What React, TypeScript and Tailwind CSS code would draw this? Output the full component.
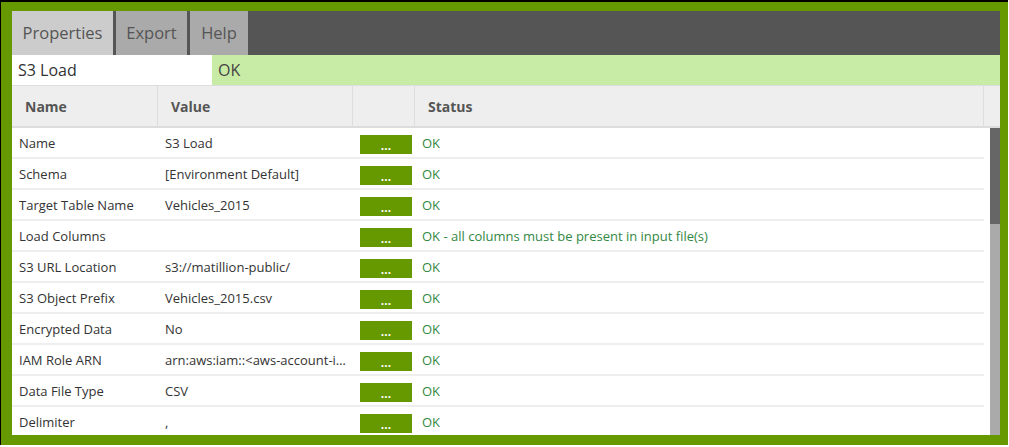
import React from 'react';

const rows: [string, string, string][] = [
  ['Name', 'S3 Load', 'OK'],
  ['Schema', '[Environment Default]', 'OK'],
  ['Target Table Name', 'Vehicles_2015', 'OK'],
  ['Load Columns', '', 'OK - all columns must be present in input file(s)'],
  ['S3 URL Location', 's3://matillion-public/', 'OK'],
  ['S3 Object Prefix', 'Vehicles_2015.csv', 'OK'],
  ['Encrypted Data', 'No', 'OK'],
  ['IAM Role ARN', 'arn:aws:iam::<aws-account-id>:role/redshift', 'OK'],
  ['Data File Type', 'CSV', 'OK'],
  ['Delimiter', ',', 'OK'],
];

export default function App() {
  return (
    <div className="w-[1009px] h-[447px] bg-white font-['Open_Sans',sans-serif]">
      <div className="w-[1008px] h-[445px] border-t-2 border-l border-black bg-[#669900] pt-[9px] pl-[11px] pr-[7px] pb-[9px]">
        <div className="flex flex-col w-[988px] h-[424px] bg-white">
          {/* tabs */}
          <div className="flex h-[44px] bg-[#555555] shrink-0">
            <div className="w-[101px] bg-[#cccccc] text-[#555] text-[16.5px] flex items-center justify-center">Properties</div>
            <div className="w-[3px]" />
            <div className="w-[71px] bg-[#aaaaaa] text-[#555] text-[16.5px] flex items-center justify-center">Export</div>
            <div className="w-[3px]" />
            <div className="w-[58px] bg-[#aaaaaa] text-[#555] text-[16.5px] flex items-center justify-center">Help</div>
          </div>
          {/* component name */}
          <div className="flex h-[31px] shrink-0 border-b border-[#dddddd]">
            <div className="w-[200px] pl-[6px] flex items-center text-[16px] text-[#333]">S3 Load</div>
            <div className="flex-1 bg-[#c8eca5] pl-[6px] flex items-center text-[16px] text-[#444]">OK</div>
          </div>
          {/* header */}
          <div className="flex h-[42px] shrink-0 bg-[#eeeeee] border-b-2 border-[#dddddd] text-[14px] font-bold text-[#555]">
            <div className="w-[146px] shrink-0 pl-[13px] flex items-center border-r border-[#dddddd]">Name</div>
            <div className="w-[195px] shrink-0 pl-[13px] flex items-center border-r border-[#dddddd]">Value</div>
            <div className="w-[62px] shrink-0 border-r border-[#dddddd]" />
            <div className="w-[569px] shrink-0 pl-[13px] flex items-center border-r border-[#dddddd]">Status</div>
            <div className="flex-1" />
          </div>
          {/* body */}
          <div className="flex flex-1 overflow-hidden">
            <div className="w-[972px] shrink-0 overflow-hidden">
              {rows.map(([name, value, status]) => (
                <div key={name} className="flex h-[31px] items-center pt-[2px] border-b-2 border-[#eeeeee] text-[13px] text-[#333]">
                  <div className="w-[146px] shrink-0 pl-[7px] truncate">{name}</div>
                  <div className="w-[195px] shrink-0 pl-[7px] pr-[1px] truncate">{value}</div>
                  <div className="w-[62px] shrink-0 pl-[7px] pt-[1px]">
                    <button className="w-[52px] h-[19px] bg-[#669900] text-white text-[12px] font-bold leading-none flex items-end justify-center pb-[2px]">
                      ...
                    </button>
                  </div>
                  <div className="pl-[7px] text-[#338844]">{status}</div>
                </div>
              ))}
            </div>
            <div className="w-[6px] shrink-0" />
            <div className="w-[10px] shrink-0 bg-[#aaaaaa] flex flex-col">
              <div className="h-[96px] bg-[#666666]" />
            </div>
          </div>
        </div>
      </div>
    </div>
  );
}
